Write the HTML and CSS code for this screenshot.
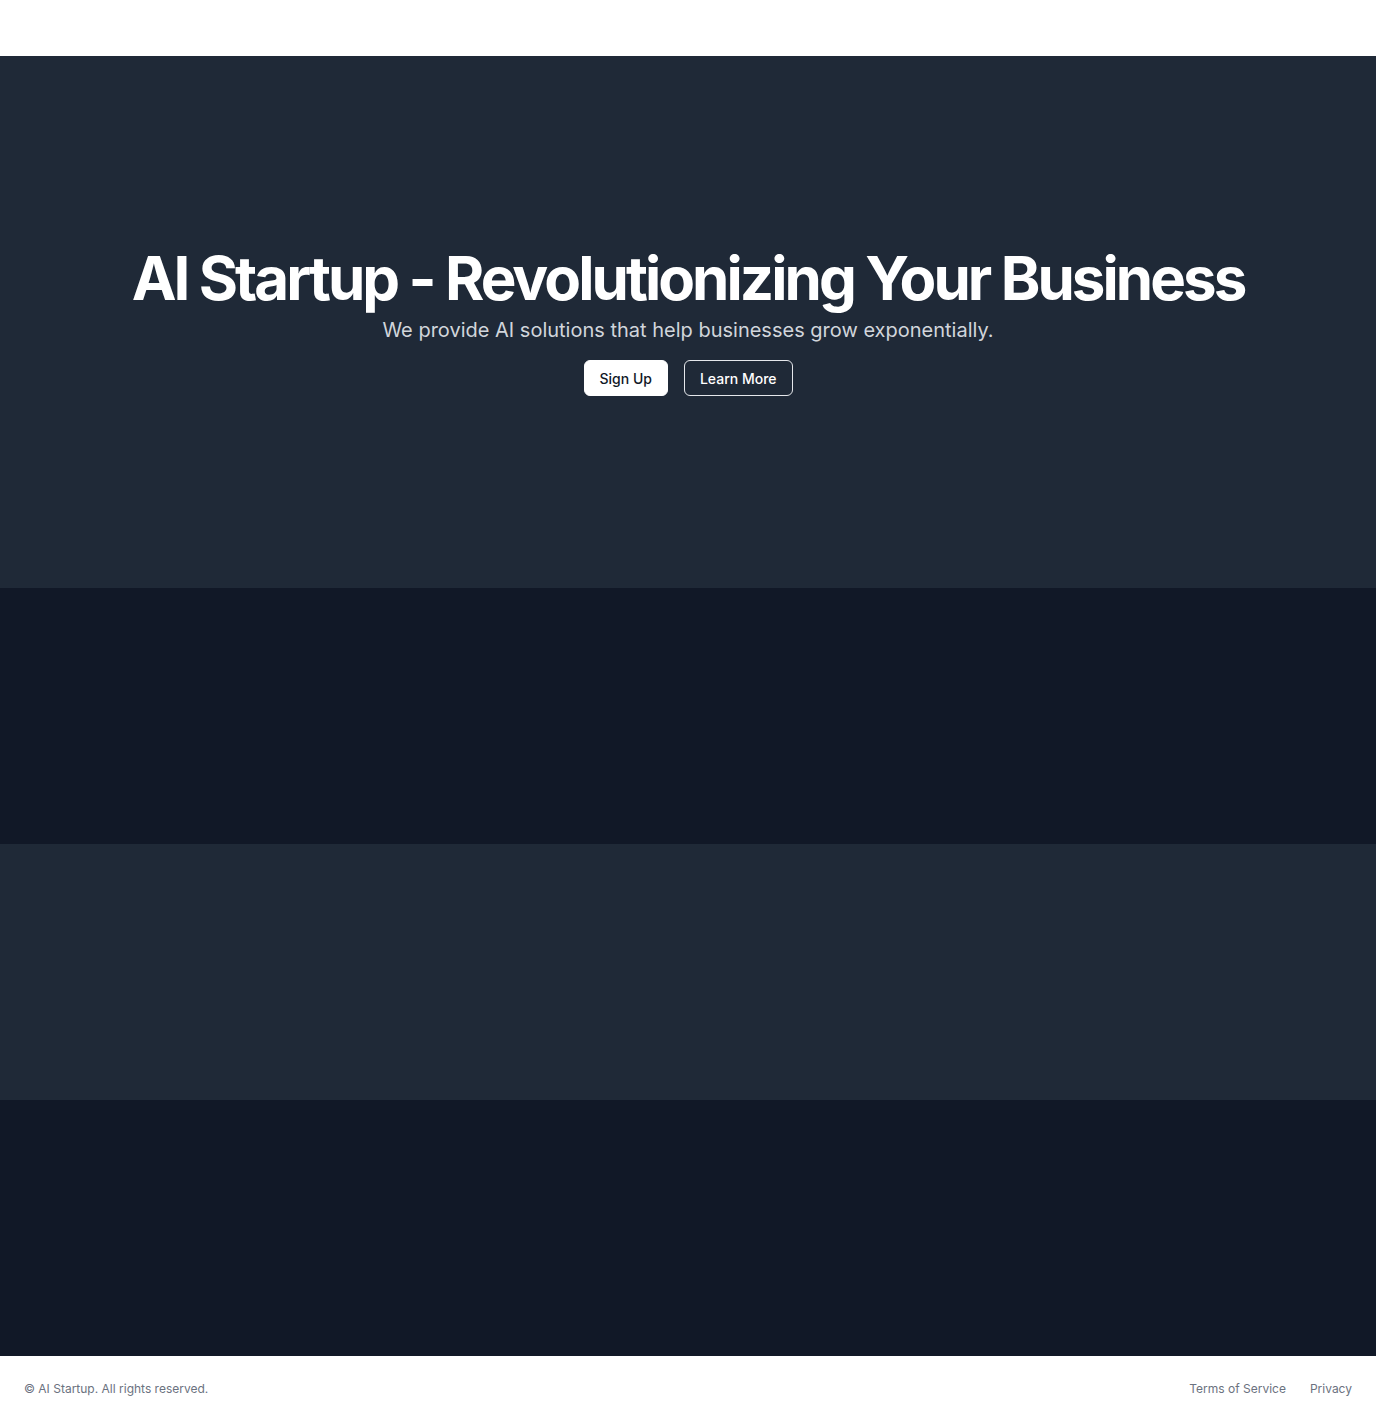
FILE: index.html
```html
<!DOCTYPE html>
<html lang="en">
<head>
<meta charset="utf-8">
<title>AI Startup</title>
<link rel="stylesheet" href="styles.css">
</head>
<body>
<header class="topbar"></header>
<main>
  <section class="hero">
    <div class="hero-inner">
      <h1 class="hero-title">AI Startup - Revolutionizing Your Business</h1>
      <p class="hero-sub">We provide AI solutions that help businesses grow exponentially.</p>
      <div class="hero-actions">
        <a class="btn btn-solid" href="#">Sign Up</a>
        <a class="btn btn-outline" href="#">Learn More</a>
      </div>
    </div>
  </section>
  <section class="band band-dark"></section>
  <section class="band band-mid"></section>
  <section class="band band-dark"></section>
</main>
<footer class="footer">
  <p class="footer-copy">© AI Startup. All rights reserved.</p>
  <nav class="footer-links">
    <a href="#">Terms of Service</a>
    <a href="#">Privacy</a>
  </nav>
</footer>
</body>
</html>
```

FILE: styles.css
```css
* { box-sizing: border-box; }
html, body { margin: 0; padding: 0; }
body {
  font-family: Inter, "Noto Sans", "Liberation Sans", sans-serif;
  background: #ffffff;
  color: #111827;
}
.topbar {
  height: 56px;
  background: #ffffff;
}
.hero {
  height: 532px;
  background: #1f2937;
  display: flex;
  align-items: center;
  justify-content: center;
}
.hero-inner {
  display: flex;
  flex-direction: column;
  align-items: center;
  text-align: center;
}
.hero-title {
  margin: 0;
  font-size: 60px;
  line-height: 60px;
  font-weight: 700;
  letter-spacing: -0.049em;
  color: #ffffff;
}
.hero-sub {
  margin: 8px 0 0;
  font-size: 20px;
  line-height: 28px;
  color: #d1d5db;
}
.hero-actions {
  margin-top: 16px;
  display: flex;
  gap: 16px;
}
.btn {
  display: inline-flex;
  align-items: center;
  justify-content: center;
  height: 36px;
  padding: 0 15px;
  border-radius: 6px;
  font-size: 14px;
  font-weight: 500;
  text-decoration: none;
}
.btn-solid {
  background: #ffffff;
  color: #111827;
  border: 1px solid #ffffff;
}
.btn-outline {
  background: transparent;
  color: #ffffff;
  border: 1px solid #e5e7eb;
}
.band { height: 256px; }
.band-dark { background: #111827; }
.band-mid { background: #1f2937; }
.footer {
  height: 65px;
  padding: 0 24px;
  display: flex;
  align-items: center;
  justify-content: space-between;
  background: #ffffff;
}
.footer-copy {
  margin: 0;
  font-size: 12px;
  color: #6b7280;
}
.footer-links {
  display: flex;
  gap: 24px;
}
.footer-links a {
  font-size: 12px;
  color: #6b7280;
  text-decoration: none;
}
```
